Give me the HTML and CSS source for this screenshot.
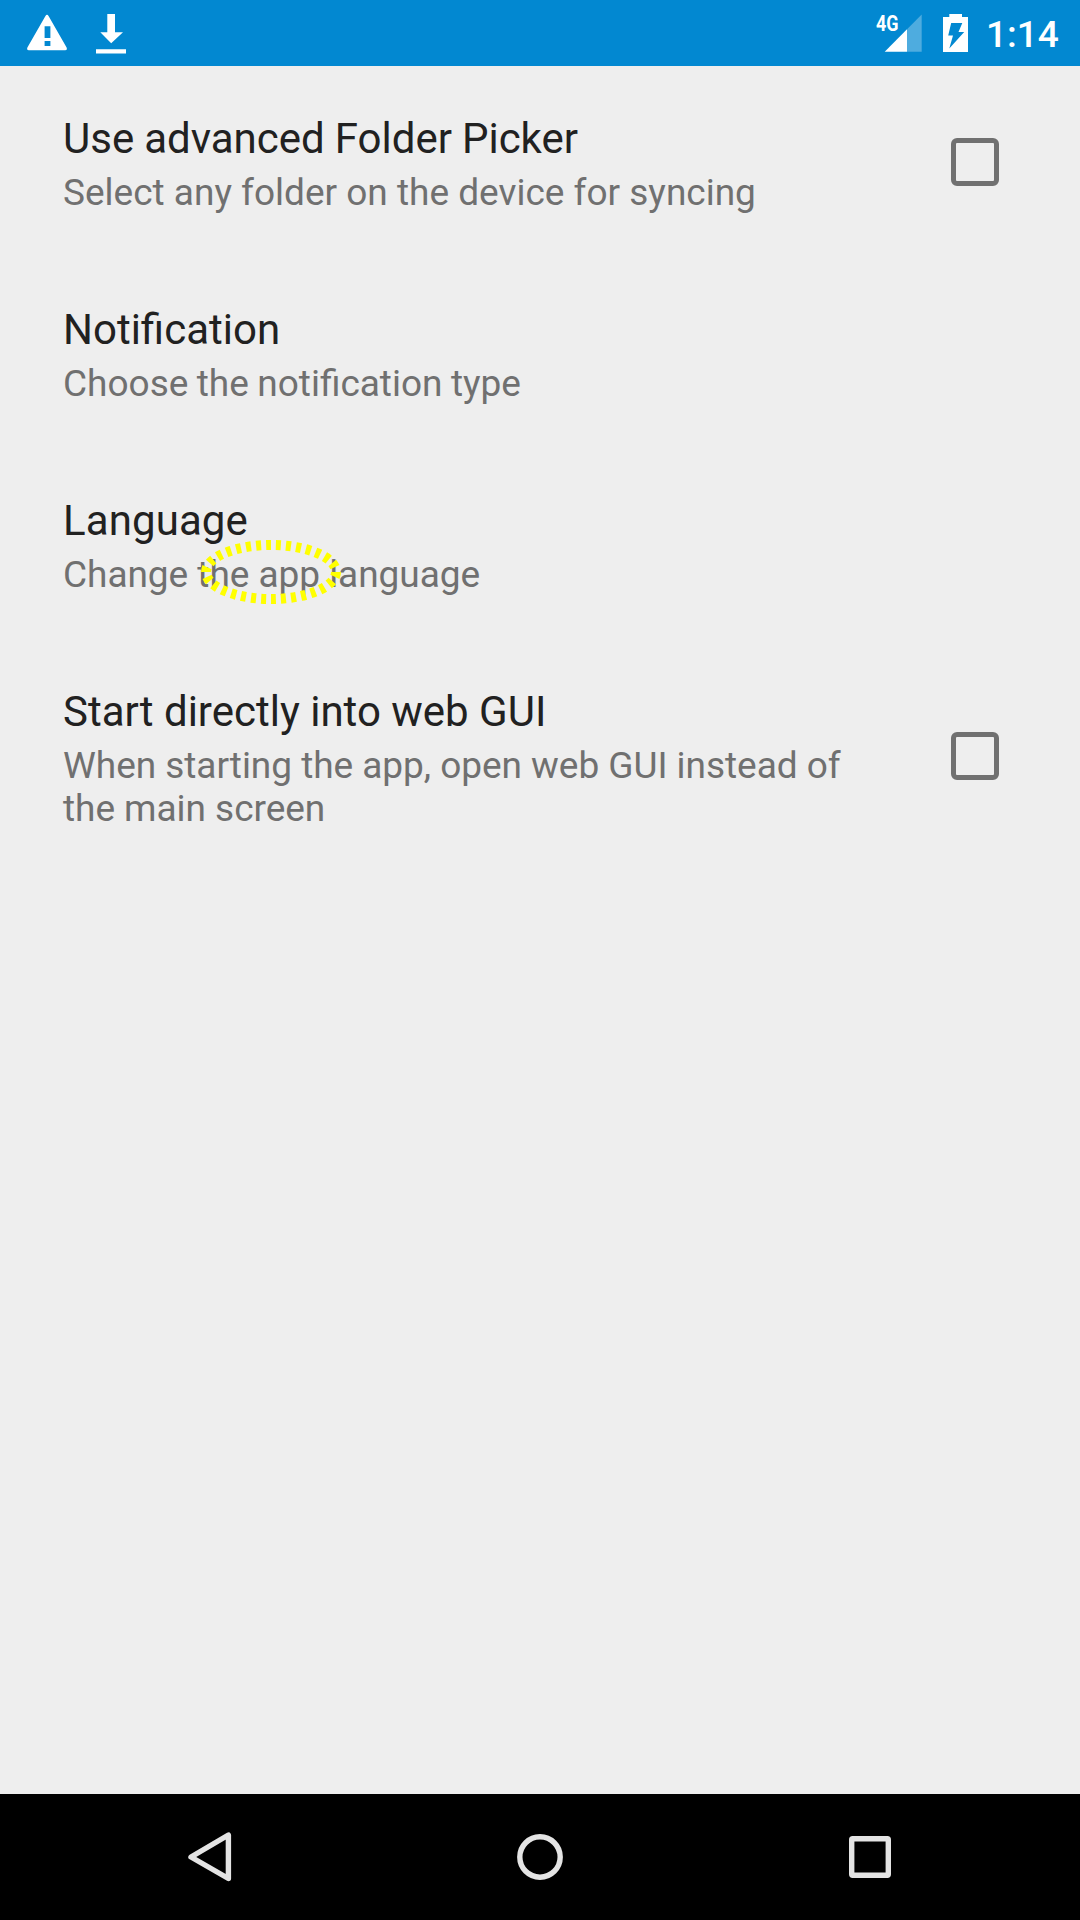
FILE: index.html
```html
<!DOCTYPE html>
<html lang="en">
<head>
<meta charset="utf-8">
<title>Settings</title>
<link rel="stylesheet" href="styles.css">
</head>
<body>
<header class="status">
  <svg class="warning" viewBox="0 0 40 66"><path fill="#fff" fill-rule="evenodd" d="M18.3 16.2Q20 13.4 21.7 16.2L39.6 47.6Q40.6 50.3 38 50.3H2Q-.6 50.3 .4 47.6ZM17.6 26.2V38H23.4V26.2ZM17.6 41V46H23.4V41Z"/></svg>
  <svg class="download" viewBox="0 0 30 66"><path fill="#fff" d="M11.3 14H19V32.2H27L15.2 43.2L4.3 32.2H11.3ZM0 49.3H30V53.4H0Z"/></svg>
  <svg class="signal" viewBox="0 0 48 66"><text class="network" x="0" y="31" textLength="22.5" lengthAdjust="spacingAndGlyphs">4G</text><path fill="#fff" opacity=".3" d="M45.7 14.5V51.7H31V29.3Z"/><path fill="#fff" d="M31 29.3V51.7H8.7Z"/></svg>
  <svg class="battery" viewBox="0 0 26 66"><path fill="#fff" fill-rule="evenodd" d="M6.3 14H19V17H25V52H0V17H6.3ZM8.2 23H19.3L15.5 32H21.2L6.3 48.5L10 35.5H5.2Z"/></svg>
  <span class="clock">1:14</span>
</header>
<main class="settings">
  <section class="row"><div class="copy"><h2 class="tight">Use advanced Folder Picker</h2><p class="wide">Select any folder on the device for syncing</p></div><span class="checkbox"></span></section>
  <section class="row"><div class="copy"><h2>Notification</h2><p class="ligatures">Choose the notification type</p></div></section>
  <section class="row"><div class="copy"><h2 class="loose">Language</h2><p>Change the app language</p></div>
    <svg class="highlight" viewBox="0 0 140 66"><ellipse cx="70" cy="33" rx="65" ry="27" pathLength="300" fill="none" stroke="#ff0" stroke-width="10" stroke-dasharray="5 5"/></svg>
  </section>
  <section class="row"><div class="copy"><h2>Start directly into web GUI</h2><p>When starting the app, open web GUI instead of<br>the main screen</p></div><span class="checkbox"></span></section>
</main>
<nav class="navigation">
  <svg viewBox="0 0 60 60"><path d="M48.4 8V51.5L11 30Z"/></svg>
  <svg viewBox="0 0 60 60"><circle cx="30" cy="30" r="20.2"/></svg>
  <svg viewBox="0 0 60 60"><rect x="11.7" y="11.7" width="36.6" height="36.6" rx="1"/></svg>
</nav>
</body>
</html>
```
FILE: styles.css
```css
* { box-sizing: border-box; }
body { margin: 0; height: 1920px; display: flex; flex-direction: column; background: #eee; font-family: Roboto, sans-serif; }
.status { height: 66px; background: #0288d1; color: #fff; display: flex; align-items: center; padding: 0 21px 0 27px; }
.status svg { height: 66px; flex: none; }
.warning { width: 40px; }
.download { width: 30px; margin-left: 29px; }
.network { font-size: 21.5px; font-weight: 700; fill: #fff; }
.signal { width: 48px; margin-left: auto; }
.battery { width: 26px; margin: 0 17px 0 19px; }
.clock { width: 73px; font-size: 37px; line-height: 44px; font-weight: 500; white-space: nowrap; padding-top: 3px; }
.settings { flex: 1; padding-top: 48px; }
.row { position: relative; height: 191px; padding: 0 81px 0 63px; display: flex; justify-content: space-between; }
h2 { margin: 0; font-size: 42px; line-height: 49px; font-weight: 400; color: #212121; }
p { margin: 8px 0 0; font-size: 37px; line-height: 43px; letter-spacing: -.04px; color: #707070; }
.wide { letter-spacing: 0; }
.tight { word-spacing: -.4px; }
.loose { letter-spacing: .1px; }
.ligatures { letter-spacing: 0; word-spacing: -.8px; }
.checkbox { width: 48px; height: 48px; border: 5px solid #707070; border-radius: 6px; margin-top: 24px; }
.row:last-child .checkbox { margin-top: 45px; }
.highlight { position: absolute; left: 201px; top: 43px; width: 140px; height: 66px; }
.navigation { height: 126px; background: #000; display: flex; justify-content: center; gap: 270px; align-items: center; }
.navigation svg { width: 60px; height: 60px; fill: none; stroke: #e4e4e4; stroke-width: 5.4; stroke-linejoin: round; }
```
